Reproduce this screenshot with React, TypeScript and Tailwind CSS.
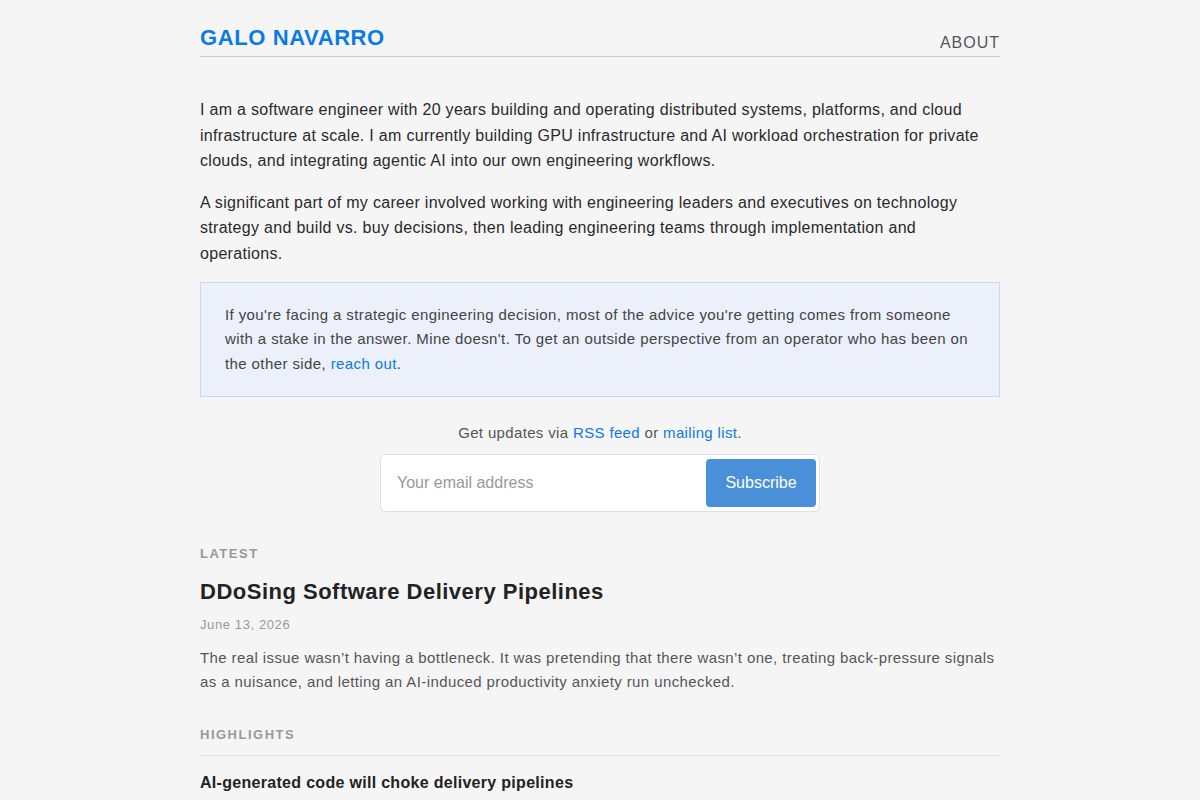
import React from "react";

export default function App() {
  return (
    <div className="min-h-screen bg-[#f5f5f5] font-['Liberation_Sans',Arial,sans-serif] text-[#333]">
      <div className="mx-auto w-[800px] pt-[23px]">
        <header className="flex items-end justify-between border-b border-[#cccccc] pb-[3px]">
          <a className="text-[22px] font-bold leading-[30px] tracking-[0.6px] text-[#0a7ae8]">GALO NAVARRO</a>
          <a className="text-[16px] leading-[20px] tracking-[1px] text-[#555]">ABOUT</a>
        </header>

        <div className="mt-[40px] text-[16px] leading-[25.6px] tracking-[0.3px] text-[#2a2a2a]">
          <p>
            I am a software engineer with 20 years building and operating distributed systems, platforms, and cloud
            infrastructure at scale. I am currently building GPU infrastructure and AI workload orchestration for private
            clouds, and integrating agentic AI into our own engineering workflows.
          </p>
          <p className="mt-[16px]">
            A significant part of my career involved working with engineering leaders and executives on technology
            strategy and build vs. buy decisions, then leading engineering teams through implementation and
            operations.
          </p>
        </div>

        <div className="mt-[15px] border border-[#ccd6e6] bg-[#ebf0fa] px-[24px] pt-[20px] pb-[19px] text-[15px] leading-[24.75px] tracking-[0.4px] text-[#444]">
          If you're facing a strategic engineering decision, most of the advice you're getting comes from someone
          with a stake in the answer. Mine doesn't. To get an outside perspective from an operator who has been on
          the other side, <a className="text-[#0a7ae8]">reach out</a>.
        </div>

        <div className="mt-[24px] text-center text-[15px] leading-[24px] tracking-[0.35px] text-[#555]">
          Get updates via <a className="text-[#0a7ae8]">RSS feed</a> or <a className="text-[#0a7ae8]">mailing list</a>.
        </div>

        <div className="mx-auto mt-[9px] flex w-[440px] items-center rounded-[6px] border border-[#e0e0e0] bg-white py-[4px] pr-[3px]">
          <input
            className="h-[48px] flex-1 bg-transparent pl-[16px] text-[16px] text-[#333] outline-none placeholder:text-[#999]"
            placeholder="Your email address"
          />
          <button className="h-[48px] w-[110px] rounded-[4px] bg-[#4a90d9] text-[16px] text-white">Subscribe</button>
        </div>

        <div className="mt-[34px] text-[13px] font-bold leading-[16px] tracking-[1.5px] text-[#999]">LATEST</div>
        <h2 className="mt-[15px] text-[22px] font-bold leading-[30px] tracking-[0.5px] text-[#222]">
          DDoSing Software Delivery Pipelines
        </h2>
        <div className="mt-[10px] text-[13px] leading-[16px] tracking-[0.6px] text-[#999]">June 13, 2026</div>
        <p className="mt-[13px] text-[15px] leading-[24px] tracking-[0.4px] text-[#555]">
          The real issue wasn’t having a bottleneck. It was pretending that there wasn’t one, treating back-pressure signals
          as a nuisance, and letting an AI-induced productivity anxiety run unchecked.
        </p>

        <div className="mt-[33px] border-b border-[#e0e0e0] pb-[12px] text-[13px] font-bold leading-[16px] tracking-[1.5px] text-[#999]">
          HIGHLIGHTS
        </div>
        <h3 className="mt-[16px] text-[16px] font-bold leading-[22px] tracking-[0.3px] text-[#222]">
          AI-generated code will choke delivery pipelines
        </h3>
      </div>
    </div>
  );
}
